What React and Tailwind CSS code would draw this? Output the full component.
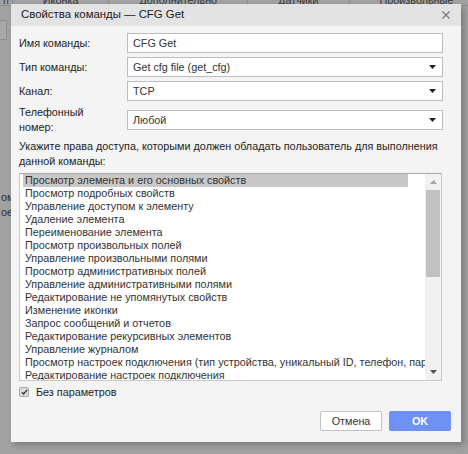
import React from 'react';

const FONT = { fontFamily: '"Liberation Sans", Arial, sans-serif' };

const rights = [
  'Просмотр элемента и его основных свойств',
  'Просмотр подробных свойств',
  'Управление доступом к элементу',
  'Удаление элемента',
  'Переименование элемента',
  'Просмотр произвольных полей',
  'Управление произвольными полями',
  'Просмотр административных полей',
  'Управление административными полями',
  'Редактирование не упомянутых свойств',
  'Изменение иконки',
  'Запрос сообщений и отчетов',
  'Редактирование рекурсивных элементов',
  'Управление журналом',
  'Просмотр настроек подключения (тип устройства, уникальный ID, телефон, пароль)',
  'Редактирование настроек подключения',
];

const tabs = ['п', 'Иконка', 'Дополнительно', 'Датчики', 'Произвольные поля', 'Группы'];

function Caret() {
  return (
    <svg width="7" height="4" viewBox="0 0 7 4" className="shrink-0">
      <path d="M0 0h7L3.5 4z" fill="#222" />
    </svg>
  );
}

function Select({ value }) {
  return (
    <div className="flex h-[20px] items-center justify-between border border-[#bdbdbd] bg-white pl-[5px] pr-[6px] text-[#333]">
      <span>{value}</span>
      <Caret />
    </div>
  );
}

function Row({ label, children, tall }) {
  return (
    <div className={`grid grid-cols-[108px_1fr] items-center ${tall ? 'h-[30px]' : ''}`}>
      <div className="max-w-[80px] leading-[15px] text-[#222]">{label}</div>
      {children}
    </div>
  );
}

export default function App() {
  return (
    <div className="relative h-[454px] w-[468px] overflow-hidden bg-[#a2a2a2]" style={FONT}>
      {/* page behind the overlay */}
      <div className="-mt-[6px] flex h-[12px] border-b border-[#8c8c8c] text-[10.8px] leading-[12px] text-[#3a3a3a]">
        {tabs.map((t, i) => (
          <div key={i} className="border-r border-[#8c8c8c] px-[30px] first:px-[3px] last:border-r-0">
            {t}
          </div>
        ))}
      </div>
      <div className="mt-[14px] ml-[-4px] h-[20px] w-[11px] border border-[#8f8f8f] bg-[#a8a8a8]" />
      <div className="mt-[150px] pl-[1px] text-[10.8px] leading-[15px] text-[#2f2f2f]">
        <div>ома</div>
        <div>ое</div>
      </div>

      {/* modal dialog */}
      <div className="absolute left-[11px] top-[4px] w-[450px] bg-[#f4f4f4] text-[10.8px] shadow-[3px_3px_6px_rgba(0,0,0,0.25)]">
        <div className="flex h-[22px] items-center justify-between bg-[#e3e3e3] pl-[10px] pr-[11px]">
          <span className="text-[11.4px] text-[#1a1a1a]">Свойства команды — CFG Get</span>
          <svg width="8" height="8" viewBox="0 0 8 8">
            <path d="M0.5 0.5l7 7M7.5 0.5l-7 7" stroke="#777" strokeWidth="1.1" />
          </svg>
        </div>

        <div className="pl-[8px] pr-[18px] pt-[7px] pb-[11px]">
          <div className="flex flex-col gap-[4px]">
            <Row label="Имя команды:">
              <div className="flex h-[20px] items-center border border-[#bdbdbd] bg-white pl-[5px] text-[#333]">CFG Get</div>
            </Row>
            <Row label="Тип команды:">
              <Select value="Get cfg file (get_cfg)" />
            </Row>
            <Row label="Канал:">
              <Select value="TCP" />
            </Row>
            <Row label="Телефонный номер:" tall>
              <Select value="Любой" />
            </Row>
          </div>

          <p className="mt-[4px] leading-[15px] text-[#222]">
            Укажите права доступа, которыми должен обладать пользователь для выполнения данной команды:
          </p>

          <div className="mt-[4px] mr-[1px] flex h-[208px] border border-[#c9c9c9] border-t-[#a8a8a8] bg-white">
            <div className="flex-1 overflow-hidden pl-[3px]">
              {rights.map((r, i) => (
                <div
                  key={i}
                  className={`h-[13px] w-[385px] whitespace-nowrap pl-[2px] leading-[13px] text-[#333] ${i === 0 ? 'bg-[#c8c8c8]' : ''}`}
                >
                  {r}
                </div>
              ))}
            </div>
            <div className="flex w-[16px] flex-col items-center bg-[#f1f1f1] px-[1px]">
              <div className="flex h-[16px] items-center justify-center">
                <svg width="7" height="4" viewBox="0 0 7 4">
                  <path d="M3.5 0L7 4H0z" fill="#a3a3a3" />
                </svg>
              </div>
              <div className="h-[87px] w-[14px] bg-[#c1c1c1]" />
              <div className="flex-1" />
              <div className="flex h-[16px] items-center justify-center">
                <svg width="7" height="4" viewBox="0 0 7 4">
                  <path d="M0 0h7L3.5 4z" fill="#505050" />
                </svg>
              </div>
            </div>
          </div>

          <label className="mt-[4px] flex h-[14px] items-center gap-[7px] text-[#222]">
            <span className="flex h-[10px] w-[10px] items-center justify-center rounded-[2px] border border-[#a8a8a8] bg-[#dcdcdc]">
              <svg width="7" height="6" viewBox="0 0 7 6">
                <path d="M0.8 3.2l1.8 1.8L6.2 0.8" stroke="#333" strokeWidth="1.3" fill="none" />
              </svg>
            </span>
            Без параметров
          </label>

          <div className="mt-[12px] flex justify-end gap-[7px]">
            <button className="h-[20px] w-[62px] rounded-[2px] border border-[#c3c3c3] bg-white text-[#333]">Отмена</button>
            <button className="mr-[-8px] h-[20px] w-[62px] rounded-[2px] bg-[#6e91f6] font-bold text-white">OK</button>
          </div>
        </div>
      </div>
    </div>
  );
}
